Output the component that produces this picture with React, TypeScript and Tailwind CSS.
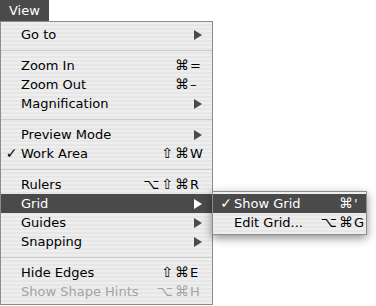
import React from "react";

type Item =
  | { sep: true }
  | {
      sep?: false;
      label: string;
      mods?: string;
      keyc?: string;
      arrow?: boolean;
      check?: boolean;
      disabled?: boolean;
      active?: boolean;
    };

const items: Item[] = [
  { label: "Go to", arrow: true },
  { sep: true },
  { label: "Zoom In", mods: "⌘", keyc: "=" },
  { label: "Zoom Out", mods: "⌘", keyc: "–" },
  { label: "Magnification", arrow: true },
  { sep: true },
  { label: "Preview Mode", arrow: true },
  { label: "Work Area", check: true, mods: "⇧⌘", keyc: "W" },
  { sep: true },
  { label: "Rulers", mods: "⌥⇧⌘", keyc: "R" },
  { label: "Grid", arrow: true, active: true },
  { label: "Guides", arrow: true },
  { label: "Snapping", arrow: true },
  { sep: true },
  { label: "Hide Edges", mods: "⇧⌘", keyc: "E" },
  { label: "Show Shape Hints", mods: "⌥⌘", keyc: "H", disabled: true },
];

const stripes =
  "bg-[repeating-linear-gradient(180deg,#eeeeee_0px,#eeeeee_2px,#e6e6e6_2px,#e6e6e6_4px)]";

function Arrow({ white }: { white?: boolean }) {
  return (
    <svg width="8" height="10" viewBox="0 0 8 10" className="block">
      <path d="M0 0 L8 5 L0 10 Z" fill={white ? "#ffffff" : "#4a4a4a"} />
    </svg>
  );
}

function Mods({ mods, width }: { mods?: string; width: string }) {
  return (
    <span className={`flex ${width} justify-end gap-[2px] whitespace-nowrap text-[14px]`}>
      {mods?.split("").map((m, i) => (
        <span key={i}>{m}</span>
      ))}
    </span>
  );
}

function SubMenu() {
  return (
    <div
      className={`absolute left-[211px] top-[-3px] w-[155px] border border-[#8c8c8c] ${stripes} py-[2px] shadow-[0_3px_9px_rgba(0,0,0,0.45)] z-10`}
    >
      <div className="flex h-[19px] items-center bg-[#4a4a4a] text-white">
        <div className="flex w-[21px] justify-end pr-[2px] text-[14px] font-bold">✓</div>
        <div className="flex-1">Show Grid</div>
        <div className="flex w-[40px] items-center">
          <Mods mods="⌘" width="w-[27px]" />
          <span className="w-[13px] pl-[1px]">'</span>
        </div>
      </div>
      <div className="flex h-[19px] items-center text-black">
        <div className="w-[21px]" />
        <div className="flex-1">Edit Grid...</div>
        <div className="flex w-[40px] items-center">
          <Mods mods="⌥⌘" width="w-[27px]" />
          <span className="w-[13px] pl-[1px]">G</span>
        </div>
      </div>
    </div>
  );
}

function Row({ it }: { it: Exclude<Item, { sep: true }> }) {
  const color = it.active ? "text-white" : it.disabled ? "text-[#a3a3a3]" : "text-black";
  return (
    <div
      className={`relative flex h-[19px] items-center ${it.active ? "bg-[#4a4a4a]" : ""} ${color}`}
    >
      <div className="flex w-[20px] justify-center pl-[1px] text-[14px] font-bold">
        {it.check ? "✓" : ""}
      </div>
      <div className="flex-1 whitespace-nowrap">{it.label}</div>
      <div className="flex w-[61px] items-center">
        {it.arrow ? (
          <div className="ml-[43px]">
            <Arrow white={it.active} />
          </div>
        ) : (
          <>
            <Mods mods={it.mods} width="w-[38px]" />
            <span className="w-[23px] pl-[1px]">{it.keyc}</span>
          </>
        )}
      </div>
      {it.active && <SubMenu />}
    </div>
  );
}

export default function App() {
  return (
    <div
      className="relative h-[306px] w-[376px] overflow-hidden bg-white text-[13px] leading-[19px]"
      style={{ fontFamily: '"DejaVu Sans", "Noto Sans", sans-serif' }}
    >
      <div className="flex h-[21px] w-[49px] items-center bg-[#4a4a4a] pl-[9px] text-white">
        View
      </div>
      <div className={`w-[213px] border border-[#8c8c8c] ${stripes} pt-[3px] pb-[3px]`}>
        {items.map((it, i) =>
          it.sep ? (
            <div key={i} className="flex h-[12px] items-center">
              <div className="h-[1px] w-full bg-[#cbcbcb]" />
            </div>
          ) : (
            <Row key={i} it={it} />
          )
        )}
      </div>
    </div>
  );
}
